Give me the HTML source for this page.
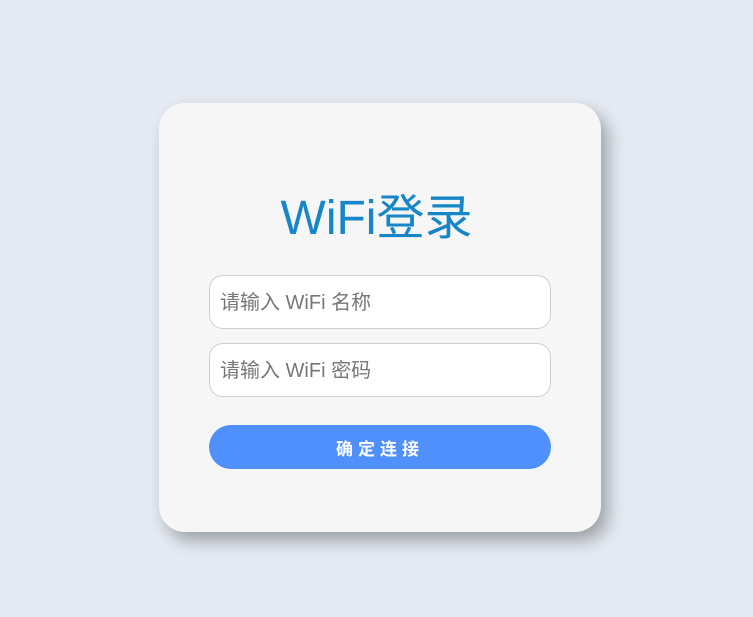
<!DOCTYPE html>
<html><head><meta charset="utf-8"><style>
html,body{margin:0;width:753px;height:617px;background:#e4e9f2;overflow:hidden;font-family:"Liberation Sans","Noto Sans CJK SC",sans-serif;}
.card{position:absolute;left:159px;top:103px;width:442px;height:429px;background:#f6f6f6;border-radius:26px;box-shadow:7px 9px 16px rgba(0,0,0,0.3);}
h1{position:absolute;left:0;right:0;top:189px;margin:0;text-align:center;font-weight:400;font-size:48px;line-height:60px;color:#1686c8;}
.in{position:absolute;left:209px;width:340px;height:52px;background:#fff;border:1px solid #cfcfcf;border-radius:14px;font-size:20px;color:#777;line-height:54px;box-sizing:content-box;}
.in span{padding-left:10px;}
.btn{position:absolute;left:209px;top:425px;width:342px;height:44px;background:#4f90fc;border-radius:22px;color:#fff;font-weight:bold;font-size:17px;line-height:49px;text-align:center;letter-spacing:5px;}
</style></head><body>
<div class="card"></div>
<h1>WiFi登录</h1>
<div class="in" style="top:275px"><span>请输入 WiFi 名称</span></div>
<div class="in" style="top:343px"><span>请输入 WiFi 密码</span></div>
<div class="btn">确定连接</div>
</body></html>
